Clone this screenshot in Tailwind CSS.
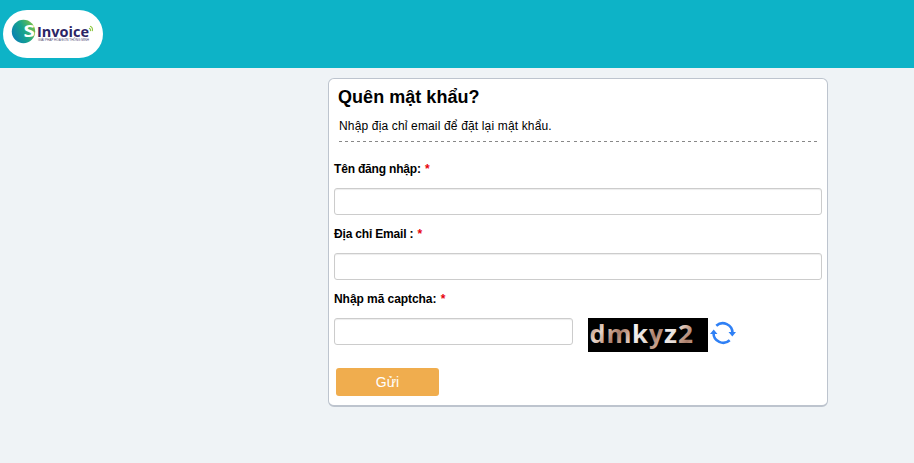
<!DOCTYPE html>
<html lang="vi">
<head>
<meta charset="utf-8">
<title>SInvoice</title>
<script src="https://cdn.jsdelivr.net/npm/@tailwindcss/browser@4"></script>
</head>
<body class="h-[463px] overflow-hidden bg-[#eff3f6] font-['Liberation_Sans',Arial,sans-serif] text-xs text-black">
<header class="h-[68px] bg-[#0db3c7] pt-[10px] pl-[3px]">
  <a class="block h-12 w-[100px] rounded-3xl bg-white">
    <svg class="block" width="100" height="48" viewBox="0 0 100 48">
      <defs><linearGradient id="globe" x1="0" y1=".7" x2="1" y2=".2"><stop offset="0" stop-color="#087fb4"/><stop offset=".5" stop-color="#18a58c"/><stop offset="1" stop-color="#80c342"/></linearGradient></defs>
      <circle cx="20.500" cy="21.500" r="11.700" fill="url(#globe)"/>
      <text x="20.500" y="27" font-family="Open Sans, sans-serif" font-weight="700" font-size="16" fill="#fff" textLength="11.500" lengthAdjust="spacingAndGlyphs">S</text>
      <text x="34" y="26.500" font-family="Open Sans, sans-serif" font-weight="700" font-size="14.500" fill="#2c2565" textLength="52" lengthAdjust="spacingAndGlyphs">Invoice</text>
      <text x="35" y="31.300" font-family="Liberation Sans, sans-serif" font-size="3.800" fill="#4b4670" textLength="51" lengthAdjust="spacingAndGlyphs">GIẢI PHÁP HÓA ĐƠN THÔNG MINH</text>
      <path d="M86 18.200q2 .6 1.500 3M87 16.200q3.200 1 2.300 5" fill="none" stroke="#8cc63f" stroke-width="1.100"/>
    </svg>
  </a>
</header>
<main class="mt-[10px] ml-[328px] h-[329px] w-[500px] rounded-md border border-b-2 border-[#bdc4ce] bg-white px-[5px]">
  <div class="mx-[5px] h-[63px] pt-[7px]">
    <h1 class="-ml-px h-[22px] text-[18px] leading-[22px] font-bold tracking-[0.04px] whitespace-nowrap">Quên mật khẩu?</h1>
    <p class="mt-[10px] h-4 leading-4 tracking-[0.155px] whitespace-nowrap">Nhập địa chỉ email để đặt lại mật khẩu.</p>
    <div class="mt-[7px] h-px w-[478px] bg-[repeating-linear-gradient(to_right,#888_0_3px,transparent_3px_6.013px)]"></div>
  </div>
  <form>
    <label class="mt-[19px] block h-4 leading-4 font-bold tracking-[-0.18px]">Tên đăng nhập: <span class="ml-px text-red-600">*</span></label>
    <input class="mt-[11px] block h-[27px] w-[488px] rounded-[3px] border border-[#ccc] shadow-[inset_0_1px_1px_rgba(0,0,0,0.075)]">
    <label class="mt-[11px] block h-4 leading-4 font-bold tracking-[-0.18px]">Địa chỉ Email : <span class="ml-px text-red-600">*</span></label>
    <input class="mt-[11px] block h-[27px] w-[488px] rounded-[3px] border border-[#ccc] shadow-[inset_0_1px_1px_rgba(0,0,0,0.075)]">
    <label class="mt-[11px] block h-4 leading-4 font-bold tracking-[-0.06px]">Nhập mã captcha: <span class="ml-px text-red-600">*</span></label>
    <div class="mt-[11px] flex h-[34px]">
      <input class="h-[27px] w-[239px] rounded-[3px] border border-[#ccc] shadow-[inset_0_1px_1px_rgba(0,0,0,0.075)]">
      <svg class="ml-[15px]" width="120" height="34" viewBox="0 0 120 34">
        <defs><linearGradient id="ink" gradientUnits="userSpaceOnUse" x1="2" y1="3" x2="14" y2="12" spreadMethod="reflect"><stop stop-color="#a87c69"/><stop offset=".5" stop-color="#c9a592"/><stop offset="1" stop-color="#e6d6cb"/></linearGradient>
        <linearGradient id="pale" x1="0" y1="0" x2="1" y2="1"><stop stop-color="#fff"/><stop offset="1" stop-color="#dcd0c8"/></linearGradient></defs>
        <rect width="120" height="34" fill="#000"/>
        <g font-family="Open Sans, sans-serif" font-weight="700" font-size="25" fill="url(#ink)">
          <text x="1.500" y="25" textLength="16" lengthAdjust="spacingAndGlyphs">d</text>
          <text x="18.500" y="25" textLength="25" lengthAdjust="spacingAndGlyphs">m</text>
          <text x="44" y="25" fill="url(#pale)" textLength="16" lengthAdjust="spacingAndGlyphs">k</text>
          <text x="61" y="25" textLength="14" lengthAdjust="spacingAndGlyphs">y</text>
          <text x="76" y="25" fill="url(#pale)" textLength="13" lengthAdjust="spacingAndGlyphs">z</text>
          <text x="90" y="25" textLength="15" lengthAdjust="spacingAndGlyphs">2</text>
        </g>
      </svg>
      <svg class="ml-[2px] mt-[2px]" width="26" height="26" viewBox="0 0 26 26">
        <g fill="none" stroke="#2f80f5" stroke-width="2.600"><path d="M6.300 5.800A9.700 9.700 0 0 1 22.500 13"/><path d="M19.700 20.200A9.700 9.700 0 0 1 3.500 13"/></g>
        <path fill="#2f80f5" d="M18.500 12h7.500l-3.700 4.500zM0 14h7.500l-3.800-4.500z"/>
      </svg>
    </div>
    <button type="button" class="mt-4 ml-[2px] block h-7 w-[103px] rounded-[3px] bg-[#f0ad4e] text-sm leading-7 text-white">Gửi</button>
  </form>
</main>
</body>
</html>
